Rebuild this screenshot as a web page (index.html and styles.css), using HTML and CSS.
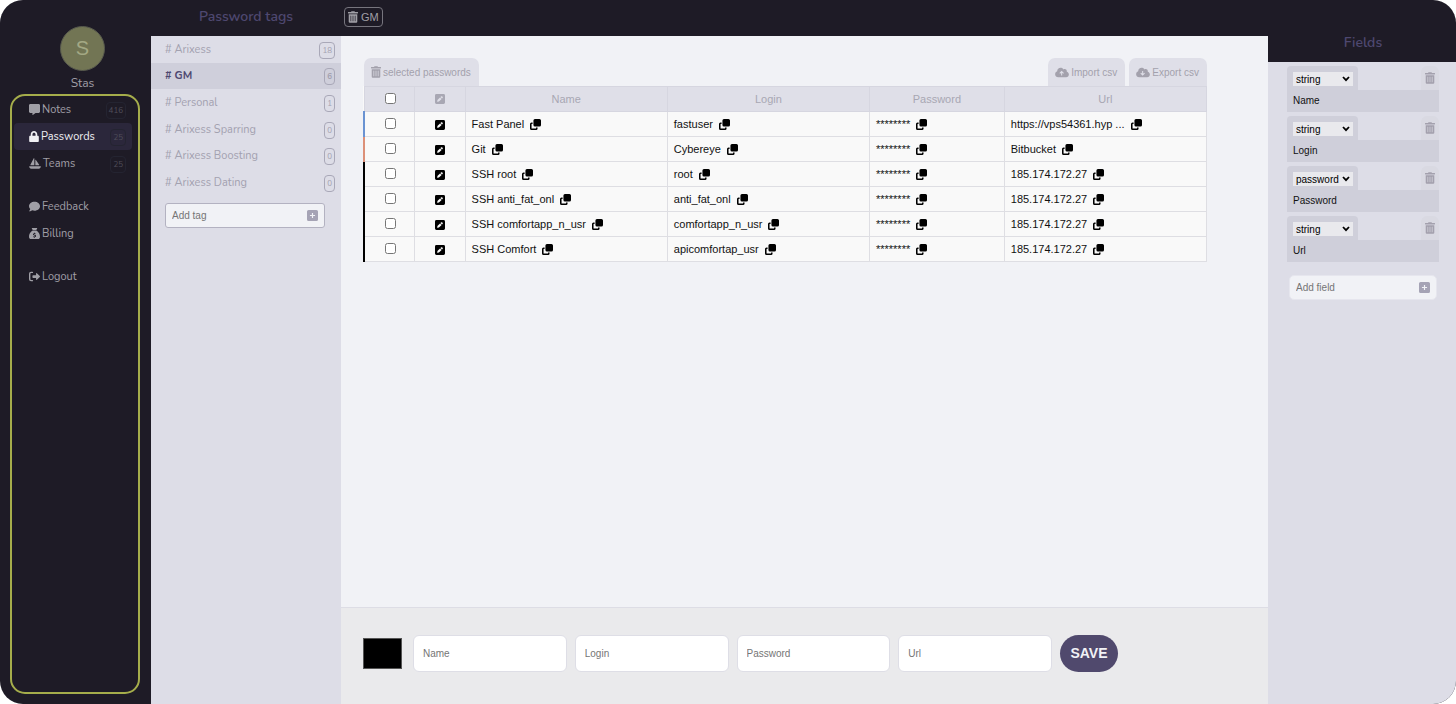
FILE: index.html
```html
<!DOCTYPE html>
<html lang="en">
<head>
<meta charset="utf-8">
<title>Passwords</title>
<link rel="stylesheet" href="styles.css">
</head>
<body>
<svg class="sprite" aria-hidden="true">
  <symbol id="i-message" viewBox="0 0 512 512"><path d="M448 0H64C28.700 0 0 28.700 0 64v288c0 35.300 28.700 64 64 64h96v84c0 9.800 11.200 15.500 19.100 9.700L304 416h144c35.300 0 64-28.700 64-64V64c0-35.300-28.700-64-64-64z"/></symbol>
  <symbol id="i-lock" viewBox="0 0 448 512"><path d="M400 224h-24v-72C376 68.200 307.800 0 224 0S72 68.200 72 152v72H48c-26.500 0-48 21.500-48 48v192c0 26.500 21.500 48 48 48h352c26.500 0 48-21.500 48-48V272c0-26.500-21.500-48-48-48zm-104 0H152v-72c0-39.700 32.300-72 72-72s72 32.300 72 72v72z"/></symbol>
  <symbol id="i-boat" viewBox="0 0 576 512"><path d="M256 16v320H80c-12 0-20-14-13-25L227 7c8-13 29-7 29 9zM304 96c0-15 19-22 28-9l158 224c8 11 0 25-13 25H304zM28 384h520c16 0 28 14 24 28-16 58-68 100-132 100H136C72 512 20 470 4 412c-4-14 8-28 24-28z"/></symbol>
  <symbol id="i-comment" viewBox="0 0 512 512"><path d="M256 32C114.600 32 0 125.100 0 240c0 49.600 21.400 95 57 130.700C44.500 421.100 2.700 466 2.200 466.500c-2.200 2.300-2.800 5.700-1.500 8.700S4.800 480 8 480c66.300 0 116-31.800 140.600-51.400 32.700 12.300 69 19.400 107.400 19.400 141.400 0 256-93.100 256-208S397.400 32 256 32z"/></symbol>
  <symbol id="i-sack" viewBox="0 0 512 512"><path fill-rule="evenodd" d="M144 0h224c13 0 21 14 14 25l-42 63H172l-42-63c-7-11 1-25 14-25zM168 120h176c12 8 168 96 168 296 0 53-43 96-96 96H96c-53 0-96-43-96-96C0 216 156 128 168 120zM238 220v22c-32 5-54 25-54 54 0 36 32 47 58 55 28 8 40 12 40 25 0 11-11 17-28 17-18 0-35-6-50-13l-14 34c15 7 31 12 48 14v24h36v-23c34-6 54-26 54-56 0-38-34-49-62-57-26-7-38-11-38-22 0-9 10-15 25-15s27 4 42 9l11-35c-10-4-21-7-32-9v-24z"/></symbol>
  <symbol id="i-logout" viewBox="0 0 512 512"><path d="M160 96a32 32 0 0 0 0-64H96a96 96 0 0 0-96 96v256a96 96 0 0 0 96 96h64a32 32 0 0 0 0-64H96a32 32 0 0 1-32-32V128a32 32 0 0 1 32-32zM502 234 366 104c-14-14-38-4-38 16v72H192a32 32 0 0 0-32 32v64a32 32 0 0 0 32 32h136v72c0 20 24 30 38 16l136-130c13-12 13-32 0-44z"/></symbol>
  <symbol id="i-trash" viewBox="0 0 448 512"><path d="M32 464a48 48 0 0 0 48 48h288a48 48 0 0 0 48-48V128H32zm272-256a16 16 0 0 1 32 0v224a16 16 0 0 1-32 0zm-96 0a16 16 0 0 1 32 0v224a16 16 0 0 1-32 0zm-96 0a16 16 0 0 1 32 0v224a16 16 0 0 1-32 0zM432 32H312l-9.400-18.700A24 24 0 0 0 281.100 0H166.800a23.700 23.700 0 0 0-21.400 13.300L136 32H16A16 16 0 0 0 0 48v32a16 16 0 0 0 16 16h416a16 16 0 0 0 16-16V48a16 16 0 0 0-16-16z"/></symbol>
  <symbol id="i-upload" viewBox="0 0 640 512"><path fill-rule="evenodd" d="M537.600 226.600c4.100-10.700 6.400-22.400 6.400-34.600 0-53-43-96-96-96-19.700 0-38.100 6-53.300 16.200C367 64.200 315.300 32 256 32c-88.400 0-160 71.600-160 160 0 2.700.1 5.400.2 8.100C40.200 219.800 0 273.200 0 336c0 79.500 64.500 144 144 144h368c70.700 0 128-57.300 128-128 0-61.900-44-113.600-102.400-125.400zM304 175 409 280 375 314 328 267V400H280V267L233 314 199 280z"/></symbol>
  <symbol id="i-download" viewBox="0 0 640 512"><path fill-rule="evenodd" d="M537.600 226.600c4.100-10.700 6.400-22.400 6.400-34.600 0-53-43-96-96-96-19.700 0-38.100 6-53.300 16.200C367 64.200 315.300 32 256 32c-88.400 0-160 71.600-160 160 0 2.700.1 5.400.2 8.100C40.200 219.800 0 273.200 0 336c0 79.500 64.500 144 144 144h368c70.700 0 128-57.300 128-128 0-61.900-44-113.600-102.400-125.400zM304 409 409 304 375 270 328 317V184H280V317L233 270 199 304z"/></symbol>
  <symbol id="i-edit" viewBox="0 0 448 448"><path fill-rule="evenodd" d="M64 0h320a64 64 0 0 1 64 64v320a64 64 0 0 1-64 64H64a64 64 0 0 1-64-64V64a64 64 0 0 1 64-64zM325 107c-15-15-40-15-55 0l-29 29 71 71 29-29c15-15 15-40 0-55zM225 152 119 258c-4 4-7 9-8 15l-15 60c-3 11 8 22 19 19l60-15c6-1 11-4 15-8l106-106z"/></symbol>
  <symbol id="i-copy" viewBox="0 0 512 512"><path d="M232 0h208a72 72 0 0 1 72 72v208a72 72 0 0 1-72 72H232a72 72 0 0 1-72-72V72a72 72 0 0 1 72-72zM72 160h48v72H72v208h208v-48h72v48a72 72 0 0 1-72 72H72a72 72 0 0 1-72-72V232a72 72 0 0 1 72-72z"/></symbol>
  <symbol id="i-plus" viewBox="0 0 448 448"><path fill-rule="evenodd" d="M64 0h320a64 64 0 0 1 64 64v320a64 64 0 0 1-64 64H64a64 64 0 0 1-64-64V64A64 64 0 0 1 64 0zM200 120v80h-80v48h80v80h48v-80h80v-48h-80v-80z"/></symbol>
  <symbol id="i-chevron" viewBox="0 0 8 6"><path d="M1 1l3 3.200L7 1" fill="none" stroke="currentColor" stroke-width="1.800"/></symbol>
</svg>

<div class="app">
  <aside class="sidebar">
    <div class="profile">
      <div class="avatar">S</div>
      <div class="profile-name">Stas</div>
    </div>
    <nav class="menu">
      <a class="menu-item" href="#"><svg class="icon"><use href="#i-message"/></svg><span>Notes</span><span class="count">416</span></a>
      <a class="menu-item active" href="#"><svg class="icon narrow"><use href="#i-lock"/></svg><span>Passwords</span><span class="count">25</span></a>
      <a class="menu-item" href="#"><svg class="icon wide"><use href="#i-boat"/></svg><span>Teams</span><span class="count">25</span></a>
      <a class="menu-item group" href="#"><svg class="icon"><use href="#i-comment"/></svg><span>Feedback</span></a>
      <a class="menu-item" href="#"><svg class="icon"><use href="#i-sack"/></svg><span>Billing</span></a>
      <a class="menu-item group" href="#"><svg class="icon"><use href="#i-logout"/></svg><span>Logout</span></a>
    </nav>
  </aside>

  <section class="tags">
    <h2 class="tags-title">Password tags</h2>
    <div class="tags-body">
      <div class="tag-list">
        <a class="tag" href="#"># Arixess<span class="tag-count">18</span></a>
        <a class="tag active" href="#"># GM<span class="tag-count">6</span></a>
        <a class="tag" href="#"># Personal<span class="tag-count">1</span></a>
        <a class="tag" href="#"># Arixess Sparring<span class="tag-count">0</span></a>
        <a class="tag" href="#"># Arixess Boosting<span class="tag-count">0</span></a>
        <a class="tag" href="#"># Arixess Dating<span class="tag-count">0</span></a>
      </div>
      <form class="add-box add-tag">
        <input type="text" placeholder="Add tag" aria-label="Add tag">
        <button type="button" aria-label="Create tag"><svg><use href="#i-plus"/></svg></button>
      </form>
    </div>
  </section>

  <main class="main">
    <header class="topbar">
      <button class="tag-delete" type="button"><svg class="trash"><use href="#i-trash"/></svg>GM</button>
    </header>
    <div class="content">
      <div class="tabs">
        <button class="tab" type="button"><svg class="trash"><use href="#i-trash"/></svg>selected passwords</button>
        <button class="tab push" type="button"><svg class="cloud"><use href="#i-upload"/></svg>Import csv</button>
        <button class="tab" type="button"><svg class="cloud"><use href="#i-download"/></svg>Export csv</button>
      </div>
      <table class="grid">
        <colgroup><col class="c-check"><col class="c-edit"><col class="c-text"><col class="c-text"><col class="c-pass"><col class="c-text"></colgroup>
        <thead>
          <tr><th><input type="checkbox" aria-label="Select all"></th><th><svg class="edit"><use href="#i-edit"/></svg></th><th>Name</th><th>Login</th><th>Password</th><th>Url</th></tr>
        </thead>
        <tbody>
          <tr class="blue"><td><input type="checkbox" aria-label="Select Fast Panel"></td><td><button type="button" aria-label="Edit"><svg class="edit"><use href="#i-edit"/></svg></button></td><td>Fast Panel<button type="button" aria-label="Copy"><svg class="copy"><use href="#i-copy"/></svg></button></td><td>fastuser<button type="button" aria-label="Copy"><svg class="copy"><use href="#i-copy"/></svg></button></td><td>********<button type="button" aria-label="Copy"><svg class="copy"><use href="#i-copy"/></svg></button></td><td>https://vps54361.hyp ...<button type="button" aria-label="Copy"><svg class="copy"><use href="#i-copy"/></svg></button></td></tr>
          <tr class="orange"><td><input type="checkbox" aria-label="Select Git"></td><td><button type="button" aria-label="Edit"><svg class="edit"><use href="#i-edit"/></svg></button></td><td>Git<button type="button" aria-label="Copy"><svg class="copy"><use href="#i-copy"/></svg></button></td><td>Cybereye<button type="button" aria-label="Copy"><svg class="copy"><use href="#i-copy"/></svg></button></td><td>********<button type="button" aria-label="Copy"><svg class="copy"><use href="#i-copy"/></svg></button></td><td>Bitbucket<button type="button" aria-label="Copy"><svg class="copy"><use href="#i-copy"/></svg></button></td></tr>
          <tr><td><input type="checkbox" aria-label="Select SSH root"></td><td><button type="button" aria-label="Edit"><svg class="edit"><use href="#i-edit"/></svg></button></td><td>SSH root<button type="button" aria-label="Copy"><svg class="copy"><use href="#i-copy"/></svg></button></td><td>root<button type="button" aria-label="Copy"><svg class="copy"><use href="#i-copy"/></svg></button></td><td>********<button type="button" aria-label="Copy"><svg class="copy"><use href="#i-copy"/></svg></button></td><td>185.174.172.27<button type="button" aria-label="Copy"><svg class="copy"><use href="#i-copy"/></svg></button></td></tr>
          <tr><td><input type="checkbox" aria-label="Select SSH anti_fat_onl"></td><td><button type="button" aria-label="Edit"><svg class="edit"><use href="#i-edit"/></svg></button></td><td>SSH anti_fat_onl<button type="button" aria-label="Copy"><svg class="copy"><use href="#i-copy"/></svg></button></td><td>anti_fat_onl<button type="button" aria-label="Copy"><svg class="copy"><use href="#i-copy"/></svg></button></td><td>********<button type="button" aria-label="Copy"><svg class="copy"><use href="#i-copy"/></svg></button></td><td>185.174.172.27<button type="button" aria-label="Copy"><svg class="copy"><use href="#i-copy"/></svg></button></td></tr>
          <tr><td><input type="checkbox" aria-label="Select SSH comfortapp_n_usr"></td><td><button type="button" aria-label="Edit"><svg class="edit"><use href="#i-edit"/></svg></button></td><td>SSH comfortapp_n_usr<button type="button" aria-label="Copy"><svg class="copy"><use href="#i-copy"/></svg></button></td><td>comfortapp_n_usr<button type="button" aria-label="Copy"><svg class="copy"><use href="#i-copy"/></svg></button></td><td>********<button type="button" aria-label="Copy"><svg class="copy"><use href="#i-copy"/></svg></button></td><td>185.174.172.27<button type="button" aria-label="Copy"><svg class="copy"><use href="#i-copy"/></svg></button></td></tr>
          <tr><td><input type="checkbox" aria-label="Select SSH Comfort"></td><td><button type="button" aria-label="Edit"><svg class="edit"><use href="#i-edit"/></svg></button></td><td>SSH Comfort<button type="button" aria-label="Copy"><svg class="copy"><use href="#i-copy"/></svg></button></td><td>apicomfortap_usr<button type="button" aria-label="Copy"><svg class="copy"><use href="#i-copy"/></svg></button></td><td>********<button type="button" aria-label="Copy"><svg class="copy"><use href="#i-copy"/></svg></button></td><td>185.174.172.27<button type="button" aria-label="Copy"><svg class="copy"><use href="#i-copy"/></svg></button></td></tr>
        </tbody>
      </table>
    </div>
    <form class="entry">
      <input class="swatch" type="color" value="#000000" aria-label="Color">
      <input class="entry-input" type="text" placeholder="Name" aria-label="Name">
      <input class="entry-input" type="text" placeholder="Login" aria-label="Login">
      <input class="entry-input" type="text" placeholder="Password" aria-label="Password">
      <input class="entry-input" type="text" placeholder="Url" aria-label="Url">
      <button class="save" type="button">SAVE</button>
    </form>
  </main>

  <aside class="fields">
    <h2 class="fields-title">Fields</h2>
    <div class="fields-body">
      <div class="field">
        <div class="field-top"><div class="field-type"><select aria-label="Type of Name"><option>string</option><option>password</option></select><svg class="chevron"><use href="#i-chevron"/></svg></div><button class="field-delete" type="button" aria-label="Delete Name"><svg class="trash"><use href="#i-trash"/></svg></button></div>
        <div class="field-name">Name</div>
      </div>
      <div class="field">
        <div class="field-top"><div class="field-type"><select aria-label="Type of Login"><option>string</option><option>password</option></select><svg class="chevron"><use href="#i-chevron"/></svg></div><button class="field-delete" type="button" aria-label="Delete Login"><svg class="trash"><use href="#i-trash"/></svg></button></div>
        <div class="field-name">Login</div>
      </div>
      <div class="field">
        <div class="field-top"><div class="field-type"><select aria-label="Type of Password"><option>string</option><option selected>password</option></select><svg class="chevron"><use href="#i-chevron"/></svg></div><button class="field-delete" type="button" aria-label="Delete Password"><svg class="trash"><use href="#i-trash"/></svg></button></div>
        <div class="field-name">Password</div>
      </div>
      <div class="field">
        <div class="field-top"><div class="field-type"><select aria-label="Type of Url"><option>string</option><option>password</option></select><svg class="chevron"><use href="#i-chevron"/></svg></div><button class="field-delete" type="button" aria-label="Delete Url"><svg class="trash"><use href="#i-trash"/></svg></button></div>
        <div class="field-name">Url</div>
      </div>
      <form class="add-box add-field">
        <input type="text" placeholder="Add field" aria-label="Add field">
        <button type="button" aria-label="Create field"><svg><use href="#i-plus"/></svg></button>
      </form>
    </div>
  </aside>
</div>
</body>
</html>
```

FILE: styles.css
```css
* { box-sizing: border-box; }

body {
  margin: 0;
  background: #fff;
  font-family: "Liberation Sans", Arial, sans-serif;
  font-size: 11px;
}

button {
  margin: 0;
  padding: 0;
  border: 0;
  background: none;
  color: inherit;
  font: inherit;
}

input, select { font-family: inherit; }
a { color: inherit; text-decoration: none; }
svg { display: block; fill: currentColor; flex: none; }
.sprite { display: none; }

.app {
  display: grid;
  grid-template-columns: 151px 190px minmax(0, 1fr) 188px;
  min-height: 100vh;
  background: #1e1b26;
  border-radius: 23px;
  overflow: hidden;
}

/* Sidebar */
.sidebar {
  display: flex;
  flex-direction: column;
  padding: 26px 11px 10px 10px;
  color: #a09fa6;
  font-family: Nunito, Lato, sans-serif;
}

.profile {
  display: flex;
  flex-direction: column;
  align-items: center;
  gap: 2px;
  padding-left: 15px;
  height: 68px;
}

.avatar {
  width: 45px;
  height: 45px;
  border: 1px solid #57594d;
  border-radius: 50%;
  background: #727554;
  color: #a3a884;
  font: 20px/43px "Liberation Sans", sans-serif;
  text-align: center;
}

.profile-name { font-size: 12px; line-height: 20px; }

.menu {
  flex: 1;
  border: 2px solid #a5ad4b;
  border-radius: 15px;
  padding: 0 6px 0 2px;
}

.menu-item {
  display: flex;
  align-items: center;
  gap: 2px;
  height: 27px;
  padding: 0 6px 0 15px;
  border-radius: 4px;
  font-size: 11px;
}

.menu-item.active { background: #2b273b; color: #f0f0f4; }
.menu-item.group { margin-top: 16px; }
.icon { width: 11px; height: 11px; }
.icon.narrow { width: 10px; height: 11px; }
.icon.wide { width: 12px; height: 11px; }

.count {
  margin: 2px 0 0 auto;
  padding: 0 2px;
  border: 1px solid #242431;
  border-radius: 4px;
  color: #504e5a;
  font-size: 8px;
  line-height: 15px;
}

/* Tags */
.tags {
  display: flex;
  flex-direction: column;
  color: #a3a1b0;
  font-family: Nunito, Lato, sans-serif;
}

.tags-title, .fields-title {
  margin: 0;
  color: #4e4870;
  font-family: Nunito, Lato, sans-serif;
  font-size: 14px;
  font-weight: 600;
  text-align: center;
}

.tags-title { height: 36px; line-height: 34px; }
.tags-body { flex: 1; background: #dddde7; }

.tag-list {
  display: grid;
  grid-auto-rows: 1fr;
  min-height: 160px;
}

.tag {
  display: flex;
  align-items: center;
  justify-content: space-between;
  padding: 0 6px 0 14px;
  font-size: 11px;
}

.tag.active { background: #cfcfdb; color: #4e4870; font-weight: 700; }

.tag-count {
  margin-top: 2px;
  padding: 0 2px;
  border: 1px solid #a9a8b8;
  border-radius: 4px;
  color: #a3a1b0;
  font-size: 8px;
  line-height: 15px;
}

.add-box {
  display: flex;
  align-items: center;
  height: 25px;
  padding: 0 6px;
  background: #f1f2f6;
  color: #a5a3b5;
}

.add-box input {
  flex: 1;
  min-width: 0;
  padding: 0;
  border: 0;
  outline: 0;
  background: none;
  font: 10px "Liberation Sans", sans-serif;
}

.add-box svg { width: 11px; height: 11px; }
.add-tag { margin: 7px 16px 0 14px; border: 1px solid #b3b2c1; border-radius: 3px; }

/* Main */
.main { display: flex; flex-direction: column; }

.topbar { display: flex; height: 36px; padding: 7px 3px 0; }

.tag-delete {
  display: flex;
  align-items: center;
  gap: 3px;
  height: 20px;
  padding: 0 3px;
  border: 1px solid #77757e;
  border-radius: 4px;
  color: #a09fa6;
}

.trash { width: 10px; height: 12px; }

.content { flex: 1; padding: 22px 61px 22px 22px; background: #f1f2f6; }

.tabs { display: flex; gap: 4px; padding-left: 1px; }

.tab {
  display: flex;
  align-items: center;
  gap: 2px;
  height: 28px;
  padding: 0 8px 0 7px;
  border-radius: 7px 7px 0 0;
  background: #dfdfe8;
  color: #a3a1ac;
  font-size: 10px;
}

.tab.push { margin-left: auto; }
.cloud { width: 14px; height: 11px; }

.grid {
  width: 100%;
  border-collapse: collapse;
  table-layout: fixed;
  background: #f9f9f9;
}

.c-check, .c-edit { width: 6%; }
.c-text { width: 24%; }
.c-pass { width: 16%; }

.grid th {
  height: 25px;
  padding: 0;
  border: 1px solid #d6d6e0;
  background: #dfdfe8;
  color: #a8a7b3;
  font-weight: 400;
}

.grid td {
  height: 25px;
  padding: 0 6px;
  border: 1px solid #dedee3;
  color: #111;
  white-space: nowrap;
}

.grid tbody td:first-child { border-left: 2px solid #000; }
.grid .blue td:first-child { border-left-color: #6a93d2; }
.grid .orange td:first-child { border-left-color: #dc9078; }
.grid td:nth-child(-n+2) { padding: 0; text-align: center; }
.grid input { width: 11px; height: 11px; margin: 0 0 2px 2px; vertical-align: middle; }
.grid td button { display: inline-block; vertical-align: middle; color: #000; }
.grid svg { margin: 0 auto; }
.edit { width: 10px; height: 10px; }
.grid .copy { width: 11px; height: 11px; margin-left: 6px; }

.entry {
  display: flex;
  align-items: center;
  gap: 8px;
  height: 97px;
  padding: 0 150px 6px 22px;
  border-top: 1px solid #dddde5;
  background: #eaeaec;
}

.swatch {
  width: 39px;
  height: 31px;
  margin-right: 3px;
  padding: 0;
  border: 1px solid #555;
  background: #000;
}

.swatch::-webkit-color-swatch-wrapper { padding: 0; }
.swatch::-webkit-color-swatch { border: 0; }

.entry-input {
  flex: 1;
  min-width: 0;
  height: 37px;
  padding: 0 9px;
  border: 1px solid #dedee6;
  border-radius: 6px;
  background: #fff;
  font-size: 10px;
}

.save {
  width: 58px;
  height: 37px;
  border-radius: 19px;
  background: #50496d;
  color: #f1f2f6;
  font-size: 14px;
  font-weight: 700;
}

/* Fields */
.fields { display: flex; flex-direction: column; }
.fields-title { height: 62px; padding: 26px 0 0 2px; line-height: 34px; }
.fields-body { flex: 1; padding: 4px 17px 16px 19px; background: #dddde7; }
.field { margin-bottom: 4px; }
.field-top { display: flex; justify-content: space-between; height: 24px; }

.field-type {
  display: grid;
  align-items: center;
  width: 71px;
  padding: 6px 5px 4px 6px;
  border-radius: 4px 4px 0 0;
  background: #cfcfda;
}

.field-type select {
  grid-area: 1 / 1;
  appearance: none;
  width: 100%;
  height: 14px;
  padding: 0 0 0 3px;
  border: 0;
  border-radius: 0;
  background: #e9e9ed;
  color: #000;
  font-size: 10px;
}

.chevron {
  grid-area: 1 / 1;
  justify-self: end;
  width: 8px;
  height: 6px;
  margin-right: 3px;
  pointer-events: none;
}

.field-delete {
  display: flex;
  justify-content: center;
  width: 18px;
  padding-top: 6px;
  border-radius: 6px 6px 0 0;
  background: #d9d9e2;
  color: #a3a0ad;
}

.field-name {
  padding: 0 6px;
  background: #cfcfda;
  color: #111;
  font-size: 10px;
  line-height: 22px;
}

.add-field { margin: 13px 2px 0; border: 1px solid #e6e6ee; border-radius: 5px; }
```
